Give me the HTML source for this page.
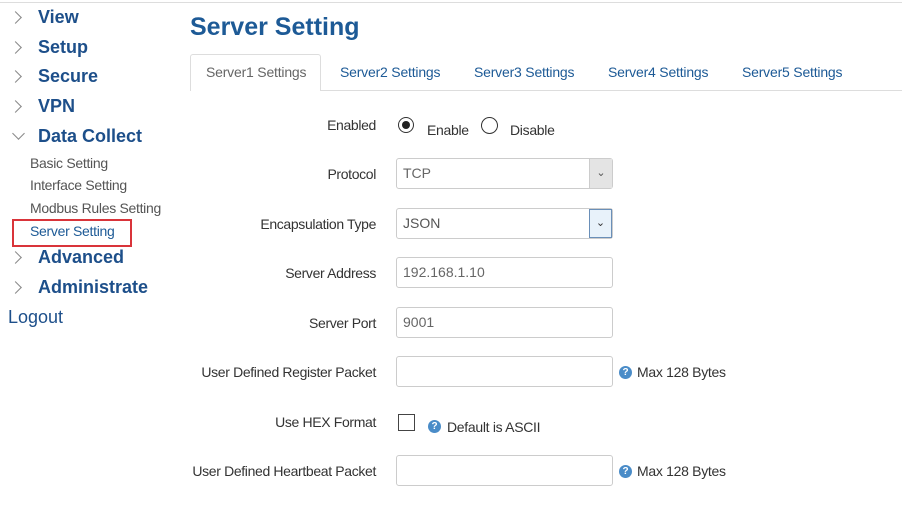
<!DOCTYPE html>
<html><head><style>
body{margin:0;width:902px;height:511px;background:#fff;font-family:"Liberation Sans",Arial,sans-serif;position:relative;overflow:hidden}
.a{position:absolute;white-space:nowrap}
.nav{left:38px;font-weight:bold;font-size:18px;color:#1d4f8a;line-height:20px}
.chev{left:11px;width:8px;height:8px;border-right:1px solid #888;border-top:1px solid #888;transform:rotate(45deg)}
.sub{left:30px;font-size:14px;color:#555;line-height:16px;letter-spacing:-0.3px}
.tab{top:64px;font-size:14px;color:#1d5a96;line-height:16px;letter-spacing:-0.2px}
.lbl{right:526px;font-size:14px;color:#333;line-height:16px;letter-spacing:-0.35px}
.in{left:396px;border:1px solid #ccc;border-radius:3px;font-size:14px;color:#666;line-height:29px;box-sizing:border-box;padding-left:6px;width:217px;height:31px}
.q{width:13px;height:13px;border-radius:50%;background:#4a8cc8;color:#fff;font-size:10px;font-weight:bold;text-align:center;line-height:13px}
.hint{font-size:14px;color:#333;line-height:16px;letter-spacing:-0.3px}
</style></head><body>
<div class="a" style="left:0;top:2px;width:902px;height:1px;background:#ddd"></div>
<div class="a chev" style="top:13px"></div><div class="a nav" style="top:7px">View</div>
<div class="a chev" style="top:43px"></div><div class="a nav" style="top:37px">Setup</div>
<div class="a chev" style="top:72px"></div><div class="a nav" style="top:66px">Secure</div>
<div class="a chev" style="top:102px"></div><div class="a nav" style="top:96px">VPN</div>
<div class="a chev" style="top:129px;left:14px;transform:rotate(135deg)"></div><div class="a nav" style="top:126px">Data Collect</div>
<div class="a sub" style="top:155px">Basic Setting</div>
<div class="a sub" style="top:177px">Interface Setting</div>
<div class="a sub" style="top:200px">Modbus Rules Setting</div>
<div class="a" style="left:12px;top:219px;width:116px;height:24px;border:2px solid #d9343a"></div>
<div class="a sub" style="top:223px;color:#1d5a96">Server Setting</div>
<div class="a chev" style="top:253px"></div><div class="a nav" style="top:247px">Advanced</div>
<div class="a chev" style="top:283px"></div><div class="a nav" style="top:277px">Administrate</div>
<div class="a" style="left:8px;top:307px;font-size:18px;color:#1d4f8a;line-height:20px">Logout</div>

<div class="a" style="left:190px;top:12px;font-size:25px;font-weight:bold;color:#1d5a96;line-height:30px">Server Setting</div>
<div class="a" style="left:190px;top:90px;width:712px;height:1px;background:#ddd"></div>
<div class="a" style="left:190px;top:54px;width:131px;height:37px;border:1px solid #ddd;border-bottom:none;border-radius:3px 3px 0 0;background:#fff;box-sizing:border-box"></div>
<div class="a tab" style="left:206px;color:#666">Server1 Settings</div>
<div class="a tab" style="left:340px">Server2 Settings</div>
<div class="a tab" style="left:474px">Server3 Settings</div>
<div class="a tab" style="left:608px">Server4 Settings</div>
<div class="a tab" style="left:742px">Server5 Settings</div>

<div class="a lbl" style="top:117px">Enabled</div>
<div class="a" style="left:398px;top:117px;width:16px;height:16px;border:1px solid #333;border-radius:50%;box-sizing:border-box"></div>
<div class="a" style="left:402px;top:121px;width:8px;height:8px;background:#222;border-radius:50%"></div>
<div class="a hint" style="left:427px;top:122px">Enable</div>
<div class="a" style="left:481px;top:117px;width:17px;height:17px;border:1px solid #333;border-radius:50%;box-sizing:border-box"></div>
<div class="a hint" style="left:510px;top:122px">Disable</div>

<div class="a lbl" style="top:166px">Protocol</div>
<div class="a in" style="top:158px">TCP</div>
<div class="a" style="left:589px;top:159px;width:22px;height:29px;background:#e4e4e4;border-left:1px solid #ccc;font-size:11px;color:#555;text-align:center;line-height:29px">&#8964;</div>

<div class="a lbl" style="top:216px">Encapsulation Type</div>
<div class="a in" style="top:208px;color:#555">JSON</div>
<div class="a" style="left:589px;top:209px;width:21px;height:27px;background:#e8f2fa;border:1px solid #6a8fb8;font-size:11px;color:#333;text-align:center;line-height:27px">&#8964;</div>

<div class="a lbl" style="top:265px">Server Address</div>
<div class="a in" style="top:257px">192.168.1.10</div>
<div class="a lbl" style="top:315px">Server Port</div>
<div class="a in" style="top:307px">9001</div>

<div class="a lbl" style="top:364px">User Defined Register Packet</div>
<div class="a in" style="top:356px"></div>
<div class="a q" style="left:619px;top:366px">?</div>
<div class="a hint" style="left:637px;top:364px">Max 128 Bytes</div>

<div class="a lbl" style="top:414px">Use HEX Format</div>
<div class="a" style="left:398px;top:414px;width:17px;height:17px;border:1px solid #444;box-sizing:border-box"></div>
<div class="a q" style="left:428px;top:420px">?</div>
<div class="a hint" style="left:447px;top:419px">Default is ASCII</div>

<div class="a lbl" style="top:463px">User Defined Heartbeat Packet</div>
<div class="a in" style="top:455px"></div>
<div class="a q" style="left:619px;top:465px">?</div>
<div class="a hint" style="left:637px;top:463px">Max 128 Bytes</div>
</body></html>
